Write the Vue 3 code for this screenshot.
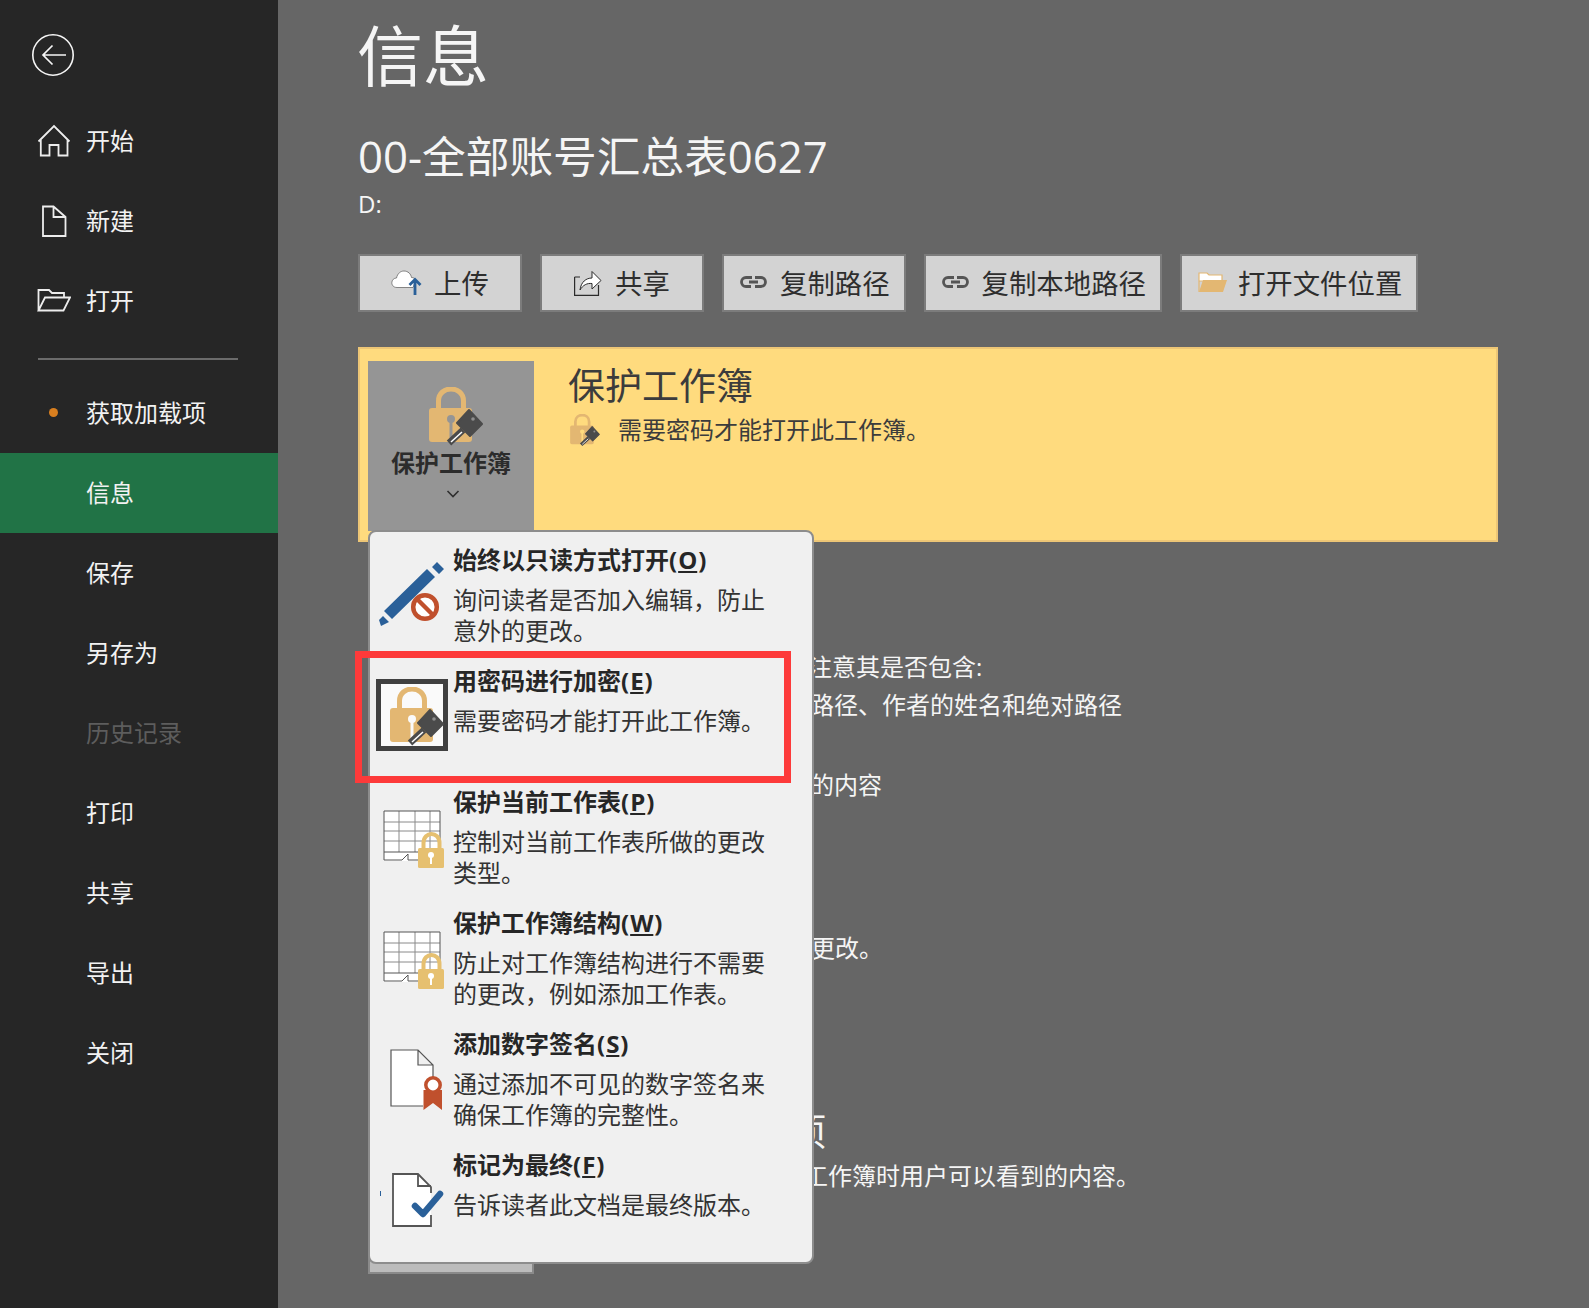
<template>
  <div class="page">
    <svg class="defs" width="0" height="0">
      <symbol id="lock-key" viewBox="0 0 54 60">
        <path class="shackle" d="M9.5 24 V14 C9.500 -2 34.500 -2 34.500 14 V24" />
        <rect class="lock-body" x="0" y="21" width="43" height="34" rx="3" />
        <circle class="hole" cx="22" cy="32" r="4" />
        <rect class="hole" x="20.500" y="33" width="3" height="22" />
        <path class="key" d="M40 23 L53 37 L41 49 L28 36 Z" />
        <path class="key-shaft" d="M34 43 L20 56" />
        <path class="key-line" d="M33 45 L22 55" />
        <circle class="key-dot" cx="44" cy="32" r="1.800" />
      </symbol>
      <symbol id="sheet-lock" viewBox="0 0 81 121">
        <path class="sheet-paper" d="M12 37 H68 V87 H12 Z" />
        <path class="sheet-grid" d="M27 37 V78 M43 37 V78 M58 37 V78 M12 48 H68 M12 57 H68 M12 67 H68" />
        <path class="sheet-edge" d="M12 78 V37 H68 V78 M12 78 H68 M12 78 V86 H30 L36 80 V86 H46" />
        <path class="small-shackle" d="M51.500 76 V69 C51.500 57 67.500 57 67.500 69 V76" />
        <rect class="small-body" x="46" y="74" width="26" height="20" rx="1.500" />
        <circle class="small-hole" cx="59" cy="81" r="3" />
        <rect class="small-hole" x="58" y="82" width="2" height="8" />
      </symbol>
    </svg>

    <aside class="sidebar">
      <div class="back">
        <svg width="44" height="44" viewBox="0 0 44 44" fill="none" stroke="#f5f5f5">
          <circle cx="22" cy="22" r="20.200" stroke-width="1.600" />
          <path d="M35 22 H12 M21.500 12.500 L12 22 L21.500 31.500" stroke-width="1.700" />
        </svg>
      </div>
      <nav>
        <div v-for="item in topNav" :key="item.label" class="nav-item">
          <svg class="nav-icon" width="34" height="34" viewBox="0 0 34 34" fill="none" stroke="#ededed" stroke-width="1.800">
            <path :d="item.icon" />
          </svg>
          <span>{{ item.label }}</span>
        </div>
        <div class="nav-divider"></div>
        <div
          v-for="item in bottomNav"
          :key="item.label"
          class="nav-item nav-item--plain"
          :class="{ 'nav-item--active': item.active, 'nav-item--off': item.off }"
        >
          <i v-if="item.dot" class="nav-dot"></i>
          <span>{{ item.label }}</span>
        </div>
      </nav>
    </aside>

    <main class="main">
      <h1 class="title">信息</h1>
      <div class="file-name">00-全部账号汇总表0627</div>
      <div class="file-path">D:</div>

      <div class="actions">
        <button class="action action--wide">
          <svg class="cloud-icon" width="31" height="25" viewBox="0 0 31 25">
            <path d="M6 17.500 C2 17.500 .8 14.500 .8 12.800 C.8 10 3 8 5.500 8 C6.500 3.500 9.500 1 13 1 C17 1 20 4 20.500 7.500 C22.500 7.500 24 8.500 25 10 L22 17.500 Z" fill="#fff" stroke="#6a6a6a" stroke-width=".8" />
            <path d="M24 25 V10 M18.500 15 L24 9.500 L29.500 15" fill="none" stroke="#2a6099" stroke-width="2.800" />
          </svg>
          <span>上传</span>
        </button>
        <button class="action action--wide">
          <svg width="28" height="28" viewBox="0 0 28 28">
            <path d="M.6 9 V27.400 H24.500 V17 M.6 9 H6" fill="none" stroke="#2b2b2b" stroke-width="1.200" />
            <path d="M6 22 C7 14 12 10 18 10 V3.500 L27 12.500 L18 21 V15.500 C13 15 9 17 6 22 Z" fill="#fff" stroke="#2b2b2b" stroke-width="1" />
          </svg>
          <span>共享</span>
        </button>
        <button v-for="label in linkActions" :key="label" class="action">
          <svg width="27" height="12" viewBox="0 0 27 12" fill="none" stroke="#555" stroke-width="2.800">
            <path d="M12 1.500 H6 a4.500 4.500 0 0 0 0 9 H11 M9 6 H18 M15 1.500 H21 a4.500 4.500 0 0 1 0 9 H15" />
          </svg>
          <span>{{ label }}</span>
        </button>
        <button class="action">
          <svg class="folder-icon" width="29" height="22" viewBox="0 0 29 22">
            <path d="M1 21 V2 H9 L11 4 H24 V10 H1 Z" fill="#fff" stroke="#e3b772" stroke-width="1.200" />
            <path d="M1 21 L5 9 H29 L25 21 Z" fill="#e3b772" />
          </svg>
          <span>打开文件位置</span>
        </button>
      </div>

      <section class="protect">
        <div class="protect-btn">
          <svg class="protect-lock" width="54" height="60"><use href="#lock-key" /></svg>
          <strong>保护工作簿</strong>
          <svg class="protect-caret" width="14" height="8" viewBox="0 0 14 8" fill="none" stroke="#2f2f2f" stroke-width="1.600">
            <path d="M1.500 1 L7 6.500 L12.500 1" />
          </svg>
        </div>
        <div class="protect-text">
          <h2>保护工作簿</h2>
          <p>
            <svg class="protect-small" width="30" height="33"><use href="#lock-key" /></svg>
            需要密码才能打开此工作簿。
          </p>
        </div>
      </section>

      <section class="block block--inspect">
        <div class="block-btn"></div>
        <div class="block-text">
          <p>注意其是否包含:</p>
          <ul>
            <li>路径、作者的姓名和绝对路径</li>
            <li>的内容</li>
          </ul>
        </div>
      </section>

      <section class="block block--manage">
        <div class="block-btn"></div>
        <div class="block-text">
          <p>更改。</p>
        </div>
      </section>

      <section class="block block--web">
        <div class="block-btn"></div>
        <div class="block-text">
          <h2>项</h2>
          <p>工作簿时用户可以看到的内容。</p>
        </div>
      </section>

      <div class="menu">
        <div v-for="item in menu" :key="item.title" class="menu-item">
          <svg class="menu-icon" width="81" height="121" viewBox="0 0 81 121">
            <template v-if="item.icon === 'pencil'">
              <path d="M12 79 L55 37 L63 45 L20 87 Z M60 35 L65 30 L72 37 L67 42 Z M7 88 L9 94 L17 90 L11 84 Z" fill="#2a6099" />
              <circle cx="53" cy="75" r="11.800" fill="#fff" stroke="#c0502d" stroke-width="4.500" />
              <path d="M45 67 L61 83" stroke="#c0502d" stroke-width="4.500" />
            </template>
            <template v-else-if="item.icon === 'lock'">
              <rect class="selected-box" x="6.500" y="28.500" width="67" height="67" />
              <svg x="18" y="34" width="54" height="60"><use href="#lock-key" /></svg>
            </template>
            <use v-else-if="item.icon === 'sheet'" href="#sheet-lock" />
            <template v-else-if="item.icon === 'sign'">
              <path d="M51 90 H19 V34 H46 L61 49 V62 M46 34 V49 H61" fill="#fff" stroke="#555" stroke-width="1.200" />
              <path d="M51.500 74 H70 V94 L61 87 L51.500 94 Z" fill="#c0502d" />
              <circle cx="61" cy="69" r="7.200" fill="#fff" stroke="#c0502d" stroke-width="3.500" />
            </template>
            <template v-else>
              <rect x="8" y="54" width="1" height="5" fill="#2a6099" />
              <path d="M21 37 H46 L59 50 V89 H21 Z" fill="#fff" />
              <path d="M59 78 V89 H21 V37 H46 L59 50 V56 M46 37 V49 H59" fill="none" stroke="#555" stroke-width="1.800" />
              <path d="M43 69 L51 77 L68 57" fill="none" stroke="#2a6099" stroke-width="6.500" stroke-linejoin="round" stroke-linecap="round" />
            </template>
          </svg>
          <div>
            <div class="menu-title">{{ item.title }}(<u>{{ item.key }}</u>)</div>
            <div v-for="line in item.lines" :key="line" class="menu-line">{{ line }}</div>
          </div>
        </div>
      </div>

      <div class="highlight"></div>
    </main>
  </div>
</template>

<script setup>
const topNav = [
  { label: '开始', icon: 'M1.500 18.500 L17 3 L32.500 18.500 M3.800 16.500 V32.500 H12.500 V22 H21.500 V32.500 H30.500 V16.500' },
  { label: '新建', icon: 'M6 3.500 H16.500 L28.500 14 V33 H6 Z M16.500 3.500 V14 H28.500' },
  { label: '打开', icon: 'M1.500 27.500 V7 H12 L15 10 H27 V14 M1.500 27.500 L8 14.500 H33 L26.500 27.500 Z' },
]

const bottomNav = [
  { label: '获取加载项', dot: true },
  { label: '信息', active: true },
  { label: '保存' },
  { label: '另存为' },
  { label: '历史记录', off: true },
  { label: '打印' },
  { label: '共享' },
  { label: '导出' },
  { label: '关闭' },
]

const linkActions = ['复制路径', '复制本地路径']

const menu = [
  { icon: 'pencil', title: '始终以只读方式打开', key: 'O', lines: ['询问读者是否加入编辑，防止', '意外的更改。'] },
  { icon: 'lock', title: '用密码进行加密', key: 'E', lines: ['需要密码才能打开此工作簿。'] },
  { icon: 'sheet', title: '保护当前工作表', key: 'P', lines: ['控制对当前工作表所做的更改', '类型。'] },
  { icon: 'sheet', title: '保护工作簿结构', key: 'W', lines: ['防止对工作簿结构进行不需要', '的更改，例如添加工作表。'] },
  { icon: 'sign', title: '添加数字签名', key: 'S', lines: ['通过添加不可见的数字签名来', '确保工作簿的完整性。'] },
  { icon: 'final', title: '标记为最终', key: 'F', lines: ['告诉读者此文档是最终版本。'] },
]
</script>

<style scoped>
.page {
  display: flex;
  width: 1589px;
  height: 1308px;
  overflow: hidden;
  background: #666;
  color: #f5f5f5;
  font-family: "Open Sans", "Noto Sans CJK SC", sans-serif;
  font-size: 24px;
}

.defs {
  position: absolute;
}

.shackle {
  fill: none;
  stroke: #e3b772;
  stroke-width: 5;
}
.lock-body {
  fill: #e3b772;
}
.hole {
  fill: var(--hole, #fff);
}
.key {
  fill: #4b4b4b;
  stroke: #4b4b4b;
  stroke-width: 2;
  stroke-linejoin: round;
}
.key-shaft {
  stroke: #4b4b4b;
  stroke-width: 6.500;
}
.key-line {
  stroke: #fff;
  stroke-width: 1.500;
}
.key-dot {
  fill: #8f8f8f;
}

.sheet-paper {
  fill: #fff;
}
.sheet-grid {
  fill: none;
  stroke: #8a8a8a;
  stroke-width: 1;
}
.sheet-edge {
  fill: none;
  stroke: #555;
  stroke-width: 1;
}
.small-shackle {
  fill: none;
  stroke: #e6c070;
  stroke-width: 4;
}
.small-body {
  fill: #e6c070;
}
.small-hole {
  fill: #fff;
}

.sidebar {
  flex: 0 0 278px;
  background: #262626;
}

.back {
  height: 100px;
  padding: 33px 0 0 31px;
  box-sizing: border-box;
}

.nav-item {
  display: flex;
  align-items: center;
  height: 80px;
  padding-left: 37px;
  gap: 15px;
  color: #f2f2f2;
}
.nav-item span {
  margin-bottom: 2px;
}
.nav-item--plain {
  position: relative;
  padding-left: 86px;
}
.nav-item--plain span {
  margin-bottom: 4px;
}
.nav-item--active {
  background: #217346;
}
.nav-item--off {
  color: #5d5d5d;
}
.nav-icon {
  flex: none;
}
.nav-dot {
  position: absolute;
  left: 49px;
  top: 35px;
  width: 9px;
  height: 9px;
  border-radius: 50%;
  background: #d97f1f;
}
.nav-divider {
  height: 2px;
  margin: 18px 40px 13px 38px;
  background: #6b6b6b;
}

.main {
  position: relative;
  flex: 1;
  padding-left: 80px;
}

.title {
  margin: 15px 0 0 -1px;
  font-size: 66px;
  line-height: 80px;
  font-weight: 400;
}
.file-name {
  margin: 33px 0 0;
  font-size: 43.700px;
  line-height: 56px;
}
.file-path {
  margin: 5px 0 0;
  line-height: 30px;
}

.actions {
  display: flex;
  gap: 18px;
  margin-top: 35px;
}
.action {
  display: flex;
  align-items: center;
  justify-content: center;
  gap: 13px;
  height: 58px;
  padding: 0 14px 2px 16px;
  border: 2px solid #7c7c7c;
  background: #d3d3d3;
  color: #2e2e2e;
  font-family: inherit;
  font-size: 27.400px;
}
.action--wide {
  width: 164px;
  padding: 0 0 2px;
}
.cloud-icon {
  margin-right: -1px;
}
.folder-icon {
  margin-right: -2px;
}

.protect {
  display: flex;
  gap: 34px;
  width: 1140px;
  height: 195px;
  box-sizing: border-box;
  margin-top: 35px;
  padding: 12px 0 0 8px;
  border: 2px solid #edc676;
  background: #ffdb7e;
  color: #3c3c3c;
  --hole: #959595;
}
.protect-btn {
  display: flex;
  flex-direction: column;
  align-items: center;
  width: 166px;
  height: 170px;
  padding-top: 26px;
  box-sizing: border-box;
  background: #959595;
}
.protect-lock {
  margin-left: 10px;
  flex: none;
}
.protect-btn strong {
  color: #2c2c2c;
  line-height: 30px;
  margin-top: 1px;
}
.protect-caret {
  margin: 12px 0 0 4px;
}
.protect-text h2 {
  margin: 3px 0 0;
  font-size: 37px;
  line-height: 44px;
  font-weight: 400;
}
.protect-text p {
  display: flex;
  align-items: center;
  margin: 1px 0 0;
  padding-left: 2px;
  line-height: 42px;
  --hole: #ffdb7e;
}
.protect-small {
  margin-right: 18px;
}

.block {
  display: flex;
  padding-left: 10px;
  color: #f5f5f5;
}
.block--inspect {
  height: 204px;
  margin-top: 58px;
}
.block--manage {
  height: 165px;
  margin-top: 79px;
}
.block--web {
  height: 164px;
  margin-top: 62px;
}
.block-btn {
  flex: 0 0 166px;
  box-sizing: border-box;
  border: 2px solid #8a8a8a;
  background: #bcbcbc;
}
.block-text {
  padding-left: 274px;
}
.block-text h2 {
  margin: 0 0 0 -19px;
  font-size: 37px;
  line-height: 44px;
  font-weight: 400;
}
.block-text p {
  margin: 0;
  line-height: 38px;
}
.block--inspect .block-text {
  padding-top: 48px;
}
.block-text ul {
  margin: 0;
  padding: 0 0 0 2px;
  list-style: none;
  line-height: 38px;
}
.block-text li + li {
  margin-top: 42px;
}
.block--manage .block-text {
  padding: 46px 0 0 277px;
}
.block--web .block-text p {
  margin: 3px 0 0 -4px;
}

.menu {
  position: absolute;
  left: 90px;
  top: 530px;
  width: 446px;
  height: 734px;
  box-sizing: border-box;
  border: 2px solid #8d8d8d;
  border-radius: 8px;
  background: #f0f0f0;
  color: #333;
}
.menu-item {
  display: grid;
  grid-template-columns: 83px 1fr;
  height: 121px;
  box-sizing: border-box;
  padding-top: 13px;
}
.menu-icon {
  margin: -13px 0 0 2px;
  --hole: #fafafa;
}
.menu-title {
  color: #262626;
  font-weight: 700;
  line-height: 30px;
  margin-bottom: 9px;
}
.menu-title u {
  padding: 0 1px;
}
.menu-line {
  line-height: 31px;
}
.selected-box {
  fill: #fafafa;
  stroke: #404040;
  stroke-width: 5;
}

.highlight {
  position: absolute;
  left: 77px;
  top: 651px;
  width: 436px;
  height: 132px;
  box-sizing: border-box;
  border: 7px solid #fd3a3a;
}
</style>
